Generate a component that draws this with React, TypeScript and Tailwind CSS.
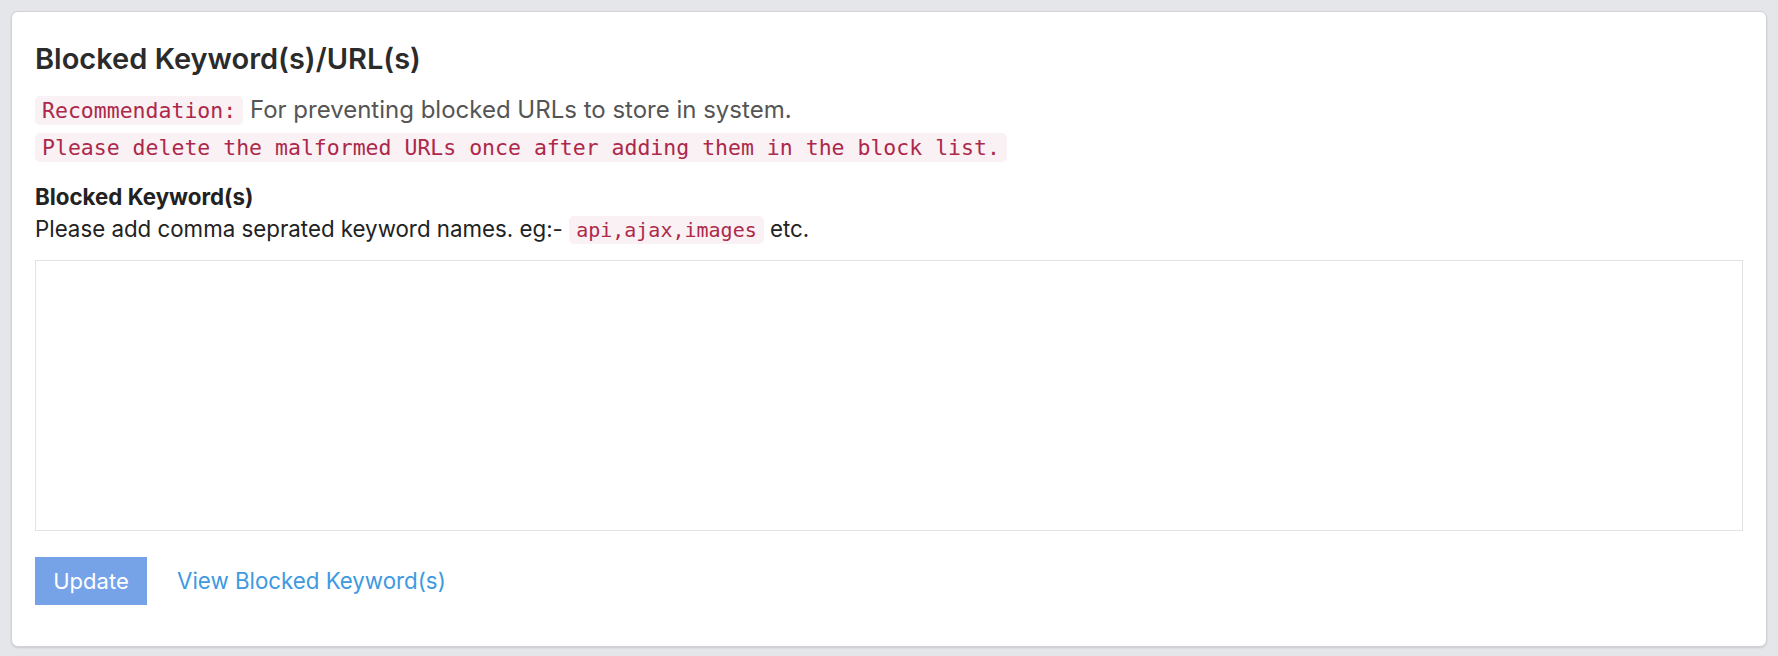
import React from "react";

const mono = "font-['DejaVu_Sans_Mono','Liberation_Mono',monospace]";

export default function App() {
  return (
    <div className="min-h-[656px] w-full bg-[#e5e6ea] p-[11px] font-['Inter','Noto_Sans',sans-serif]">
      <div className="rounded-[7px] border border-[#d2d2d6] bg-white px-[23px] pt-[30px] pb-[41px] shadow-[0_1px_2px_rgba(0,0,0,0.12)]">
        <h3 className="text-[29px] leading-[33px] font-semibold text-[#2b2b2b]">
          Blocked Keyword(s)/URL(s)
        </h3>
        <div className="mt-[17px] text-[24px] leading-[36px] text-[#555555]">
          <div>
            <code className={`${mono} rounded-[5px] bg-[#f9f1f3] px-[7px] py-[2px] text-[21.5px] text-[#ad284b]`}>
              Recommendation:
            </code>{" "}
            For preventing blocked URLs to store in system.
          </div>
          <div>
            <code className={`${mono} rounded-[5px] bg-[#f9f1f3] px-[7px] py-[2px] text-[21.5px] text-[#ad284b]`}>
              Please delete the malformed URLs once after adding them in the block list.
            </code>
          </div>
        </div>
        <div className="mt-[15px] text-[22.3px] leading-[32px] text-[#222222]">
          <div className="font-bold">Blocked Keyword(s)</div>
          <div>
            Please add comma seprated keyword names. eg:-{" "}
            <code className={`${mono} rounded-[5px] bg-[#f9f1f3] px-[7px] py-[2px] text-[20px] text-[#ad284b]`}>
              api,ajax,images
            </code>{" "}
            etc.
          </div>
        </div>
        <textarea className="mt-[14px] block h-[271px] w-full resize-none border border-[#e3e3e3] bg-white outline-none" />
        <div className="mt-[26px] flex items-center gap-[30px]">
          <button className="h-[48px] w-[112px] bg-[#76a2e7] text-[22px] text-white">
            Update
          </button>
          <a className="cursor-pointer text-[22.3px] text-[#3d9ae0]">View Blocked Keyword(s)</a>
        </div>
      </div>
    </div>
  );
}
